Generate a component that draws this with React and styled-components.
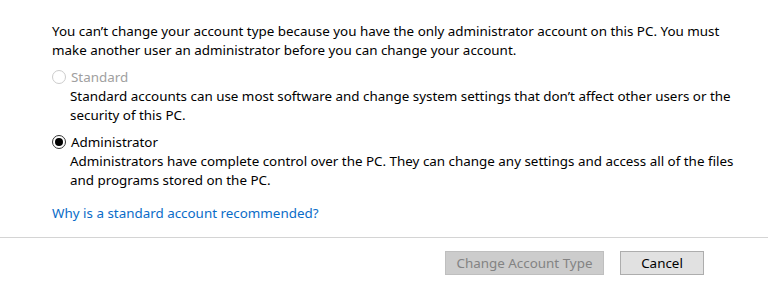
import React, { useState } from "react";
import styled, { createGlobalStyle } from "styled-components";

const Global = createGlobalStyle`
  html, body {
    margin: 0;
    padding: 0;
    background: #ffffff;
  }
  body {
    font-family: "Noto Sans", "Open Sans", sans-serif;
    font-size: 13.4px;
    color: #000000;
  }
`;

const Dialog = styled.div`
  width: 768px;
  height: 295px;
  display: flex;
  flex-direction: column;
  background: #ffffff;
`;

const Body = styled.div`
  padding: 22px 10px 0 52px;
  display: flex;
  flex-direction: column;
`;

const Text = styled.p`
  margin: 0;
  line-height: 19px;
  color: ${(p) => (p.muted ? "#a0a0a0" : "#000000")};
`;

const Option = styled.div`
  margin-top: ${(p) => p.top}px;
  display: flex;
  flex-direction: column;
`;

const RadioRow = styled.label`
  display: flex;
  align-items: center;
  gap: 5px;
  height: 21px;
  cursor: ${(p) => (p.disabled ? "default" : "pointer")};
  color: ${(p) => (p.disabled ? "#a0a0a0" : "#000000")};
`;

const Circle = styled.span`
  width: 12px;
  height: 12px;
  border-radius: 50%;
  border: 1px solid ${(p) => (p.disabled ? "#cccccc" : "#333333")};
  display: flex;
  align-items: center;
  justify-content: center;
  flex-shrink: 0;
  &::after {
    content: "";
    width: 8px;
    height: 8px;
    border-radius: 50%;
    background: #000000;
    display: ${(p) => (p.checked ? "block" : "none")};
  }
`;

const Desc = styled.div`
  padding-left: 18px;
  line-height: 19px;
`;

const Link = styled.a`
  margin-top: 14px;
  color: #0a6cc8;
  line-height: 19px;
  text-decoration: none;
  cursor: pointer;
  align-self: flex-start;
`;

const Divider = styled.div`
  margin-top: 14px;
  height: 1px;
  background: #d4d4d4;
`;

const Footer = styled.div`
  display: flex;
  justify-content: flex-end;
  gap: 16px;
  padding: 13px 64px 0 0;
`;

const Button = styled.button`
  height: 24px;
  width: ${(p) => p.w}px;
  font-family: inherit;
  font-size: 13.4px;
  padding: 0;
  border: 1px solid ${(p) => (p.disabled ? "#bfbfbf" : "#adadad")};
  background: ${(p) => (p.disabled ? "#cccccc" : "#e1e1e1")};
  color: ${(p) => (p.disabled ? "#838383" : "#000000")};
  cursor: ${(p) => (p.disabled ? "default" : "pointer")};
`;

export default function App() {
  const [type, setType] = useState("admin");

  return (
    <Dialog>
      <Global />
      <Body>
        <Text>
          You can’t change your account type because you have the only
          administrator account on this PC. You must
          <br />
          make another user an administrator before you can change your account.
        </Text>

        <Option top={6}>
          <RadioRow disabled>
            <Circle disabled checked={type === "standard"} />
            Standard
          </RadioRow>
          <Desc>
            Standard accounts can use most software and change system settings
            that don’t affect other users or the
            <br />
            security of this PC.
          </Desc>
        </Option>

        <Option top={6}>
          <RadioRow onClick={() => setType("admin")}>
            <Circle checked={type === "admin"} />
            Administrator
          </RadioRow>
          <Desc>
            Administrators have complete control over the PC. They can change
            any settings and access all of the files
            <br />
            and programs stored on the PC.
          </Desc>
        </Option>

        <Link>Why is a standard account recommended?</Link>
      </Body>
      <Divider />
      <Footer>
        <Button w={159} disabled>
          Change Account Type
        </Button>
        <Button w={84}>Cancel</Button>
      </Footer>
    </Dialog>
  );
}
